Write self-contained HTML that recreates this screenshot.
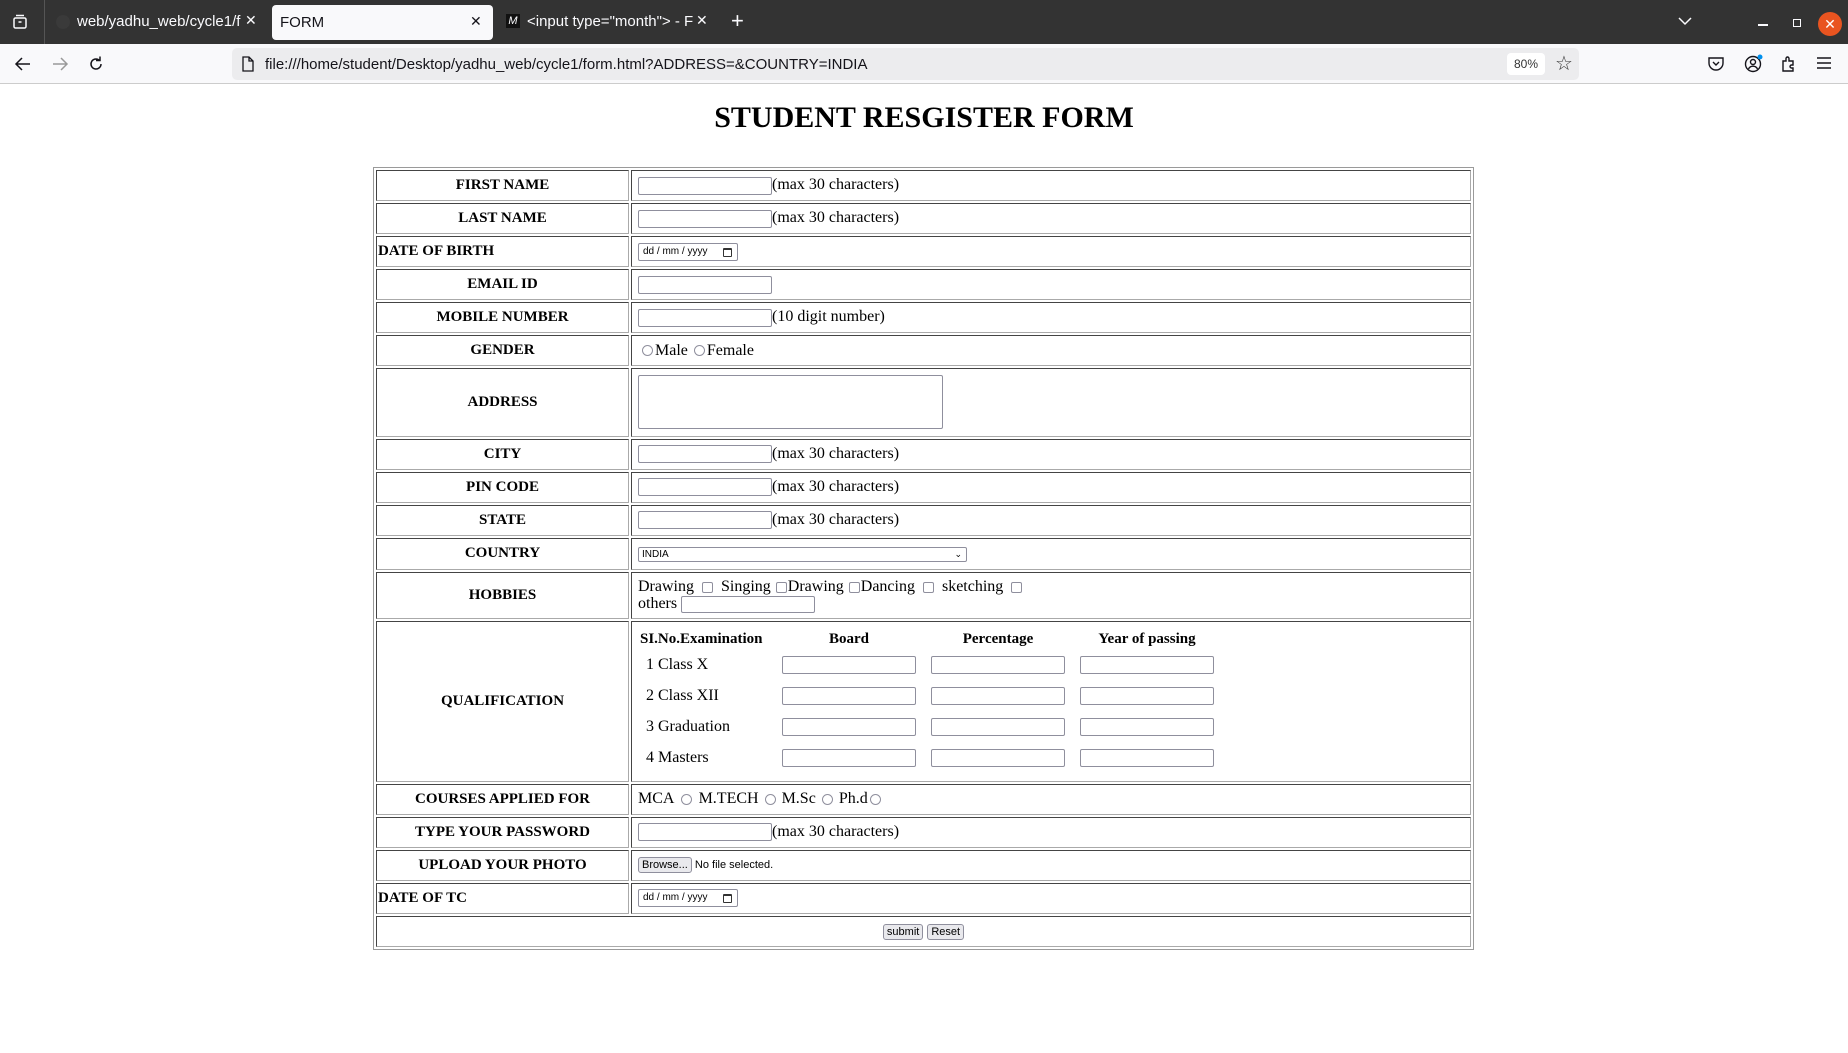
<!DOCTYPE html>
<html><head><meta charset="utf-8"><style>
*{box-sizing:border-box}
body{margin:0;width:1848px;height:1053px;background:#fff;overflow:hidden;font-family:"Liberation Serif",serif;color:#000;position:relative}
.tabs{position:absolute;left:0;top:0;width:1848px;height:44px;background:#333;font-family:"Liberation Sans",sans-serif;color:#fbfbfe;font-size:15px}
.nav{position:absolute;left:0;top:44px;width:1848px;height:40px;background:#f9f9fb;border-bottom:1px solid #ccc;font-family:"Liberation Sans",sans-serif}
.a{position:absolute}
.url{position:absolute;left:232px;top:4px;width:1347px;height:32px;background:#ececee;border-radius:5px}
h1{position:absolute;top:101px;left:0;width:1848px;text-align:center;margin:0;font-size:30px;font-weight:bold}
table.f{position:absolute;left:373px;top:167px;width:1101px;border:1px solid #9a9a9a;border-spacing:2px;border-collapse:separate}
table.f td{border:1px solid;border-color:#444 #aaa #aaa #444;padding:0 0 0 6px;font-size:16px;height:31px;vertical-align:middle}
table.f td.l{width:253px;font-weight:bold;text-align:center;font-size:15px;padding:0}
table.f td.ll{text-align:left;padding-left:1px}
.t{display:inline-block;width:134px;height:18px;border:1px solid #8f8f9d;border-radius:2px;vertical-align:middle;background:#fff}
.d{display:inline-block;width:100px;height:18px;border:1px solid #8f8f9d;border-radius:2px;vertical-align:middle;font-family:"Liberation Sans",sans-serif;font-size:10px;line-height:16px;padding-left:4px;white-space:nowrap;position:relative}
.d i{position:absolute;right:5px;top:4px;width:9px;height:9px;border:1px solid #333;border-top-width:2px;border-radius:1px}
.r{display:inline-block;width:11px;height:11px;border:1px solid #8f8f9d;border-radius:50%;vertical-align:middle;margin:0 2px}
.c{display:inline-block;width:11px;height:11px;border:1px solid #8f8f9d;border-radius:2px;vertical-align:middle;margin:0 4px}
.btn{display:inline-block;border:1px solid #8f8f9d;border-radius:3px;background:#e9e9ed;font-family:"Liberation Sans",sans-serif;font-size:11px;height:16px;line-height:14px;padding:0 3px;vertical-align:middle}
</style></head><body>
<div class="tabs">
<svg class="a" style="left:12px;top:14px" width="16" height="16" viewBox="0 0 16 16" fill="none" stroke="#fbfbfe" stroke-width="1.5"><rect x="2" y="4" width="12" height="10" rx="1.5"/><path d="M4 1.5h8M6.5 8h3"/></svg>
<div class="a" style="left:44px;top:0;width:1px;height:44px;background:#555"></div>
<div class="a" style="left:56px;top:15px;width:14px;height:14px;border-radius:50%;background:#3a3a3a"></div>
<div class="a" style="left:77px;top:13px;width:165px;overflow:hidden;white-space:nowrap">web/yadhu_web/cycle1/f</div>
<div class="a" style="left:245px;top:12px;font-size:14px">✕</div>
<div class="a" style="left:272px;top:5px;width:221px;height:35px;background:#f9f9fb;border-radius:4px;color:#15141a"><span class="a" style="left:8px;top:9px">FORM</span><span class="a" style="left:198px;top:8px;font-size:14px">✕</span></div>
<div class="a" style="left:506px;top:14px;width:14px;height:14px;background:#111;font-size:11px;font-style:italic;text-align:center;line-height:14px">M</div>
<div class="a" style="left:527px;top:13px;white-space:nowrap">&lt;input type="month"&gt; - F</div>
<div class="a" style="left:696px;top:12px;font-size:14px">✕</div>
<div class="a" style="left:731px;top:8px;font-size:22px;font-weight:300">+</div>
<svg class="a" style="left:1677px;top:15px" width="16" height="12" viewBox="0 0 16 12" fill="none" stroke="#fbfbfe" stroke-width="1.5"><path d="M2 3l6 6 6-6"/></svg>
<div class="a" style="left:1758px;top:24px;width:10px;height:1.5px;background:#fbfbfe"></div>
<div class="a" style="left:1793px;top:19px;width:8px;height:8px;border:1.3px solid #fbfbfe"></div>
<div class="a" style="left:1818px;top:12px;width:24px;height:24px;border-radius:50%;background:#e95420;text-align:center;line-height:24px;font-size:14px;color:#fff">✕</div>
</div>
<div class="nav">
<svg class="a" style="left:14px;top:12px" width="18" height="16" viewBox="0 0 18 16" fill="none" stroke="#15141a" stroke-width="1.5"><path d="M16 8H3M8 2L2 8l6 6"/></svg>
<svg class="a" style="left:51px;top:12px" width="18" height="16" viewBox="0 0 18 16" fill="none" stroke="#999" stroke-width="1.5"><path d="M2 8h13M10 2l6 6-6 6"/></svg>
<svg class="a" style="left:87px;top:11px" width="18" height="18" viewBox="0 0 18 18" fill="none" stroke="#15141a" stroke-width="1.5"><path d="M14 9a5 5 0 1 1-2-4M13 1.5v4h-4"/></svg>
<div class="url">
<svg class="a" style="left:9px;top:8px" width="14" height="16" viewBox="0 0 14 16" fill="none" stroke="#15141a" stroke-width="1.3"><path d="M2 1h6l4 4v10H2z M8 1v4h4"/></svg>
<div class="a" style="left:33px;top:8px;font-size:15px;color:#15141a;white-space:nowrap">file:///home/student/Desktop/yadhu_web/cycle1/form.html?ADDRESS=&amp;COUNTRY=INDIA</div>
<div class="a" style="left:1275px;top:5px;width:38px;height:22px;background:#fff;border-radius:4px;font-size:12px;text-align:center;line-height:22px;color:#333">80%</div>
<div class="a" style="left:1323px;top:3px;font-size:20px;color:#333">☆</div>
</div>
<svg class="a" style="left:1707px;top:11px" width="18" height="18" viewBox="0 0 18 18" fill="none" stroke="#15141a" stroke-width="1.4"><path d="M2 3h14v5a7 7 0 0 1-14 0z M6 7l3 3 3-3"/></svg>
<svg class="a" style="left:1744px;top:10px" width="20" height="20" viewBox="0 0 20 20" fill="none" stroke="#15141a" stroke-width="1.4"><circle cx="9" cy="10" r="7.5"/><circle cx="9" cy="8" r="2.5"/><path d="M4.5 15a5 5 0 0 1 9 0"/><circle cx="16" cy="3" r="2.5" fill="#0090ed" stroke="none"/></svg>
<svg class="a" style="left:1780px;top:11px" width="18" height="18" viewBox="0 0 18 18" fill="none" stroke="#15141a" stroke-width="1.4"><path d="M3 6h3V3.5a1.5 1.5 0 0 1 3 0V6h4v4h-1.5a1.5 1.5 0 0 0 0 3H13v3H3z"/></svg>
<svg class="a" style="left:1816px;top:12px" width="16" height="14" viewBox="0 0 16 14" stroke="#15141a" stroke-width="1.4"><path d="M1 2h14M1 7h14M1 12h14"/></svg>
</div>
<h1>STUDENT RESGISTER FORM</h1>
<table class="f">
<tr><td class="l">FIRST NAME</td><td><span class="t"></span>(max 30 characters)</td></tr>
<tr><td class="l">LAST NAME</td><td><span class="t"></span>(max 30 characters)</td></tr>
<tr><td class="l ll">DATE OF BIRTH</td><td><span class="d">dd / mm / yyyy<i></i></span></td></tr>
<tr><td class="l">EMAIL ID</td><td><span class="t"></span></td></tr>
<tr><td class="l">MOBILE NUMBER</td><td><span class="t"></span>(10 digit number)</td></tr>
<tr><td class="l">GENDER</td><td><span class="r" style="margin-left:4px"></span>Male <span class="r"></span>Female</td></tr>
<tr><td class="l" style="height:68.7px">ADDRESS</td><td><span style="display:inline-block;width:305px;height:54px;border:1px solid #8f8f9d;border-radius:2px;vertical-align:middle"></span></td></tr>
<tr><td class="l">CITY</td><td><span class="t"></span>(max 30 characters)</td></tr>
<tr><td class="l">PIN CODE</td><td><span class="t"></span>(max 30 characters)</td></tr>
<tr><td class="l">STATE</td><td><span class="t"></span>(max 30 characters)</td></tr>
<tr><td class="l" style="height:32px">COUNTRY</td><td><span style="display:inline-block;width:329px;height:15px;border:1px solid #8f8f9d;border-radius:2px;vertical-align:middle;font-family:'Liberation Sans',sans-serif;font-size:10px;line-height:13px;padding-left:3px;position:relative">INDIA<span style="position:absolute;right:4px;top:0;font-size:9px">⌄</span></span></td></tr>
<tr><td class="l" style="height:47.5px">HOBBIES</td><td style="line-height:17px">Drawing <span class="c"></span> Singing <span class="c" style="margin:0 1px"></span>Drawing <span class="c" style="margin:0 1px"></span>Dancing <span class="c"></span> sketching <span class="c"></span><br>others <span class="t" style="height:17px"></span></td></tr>
<tr><td class="l" style="height:160.6px">QUALIFICATION</td><td style="position:relative;padding:0">
<div class="a" style="left:8px;top:9px;font-weight:bold;font-size:15px">SI.No.Examination</div>
<div class="a" style="left:150px;top:9px;width:134px;text-align:center;font-weight:bold;font-size:15px">Board</div>
<div class="a" style="left:299px;top:9px;width:134px;text-align:center;font-weight:bold;font-size:15px">Percentage</div>
<div class="a" style="left:448px;top:9px;width:134px;text-align:center;font-weight:bold;font-size:15px">Year of passing</div>
<div class="a" style="left:14px;top:34px">1 Class X</div>
<div class="a" style="left:14px;top:65px">2 Class XII</div>
<div class="a" style="left:14px;top:96px">3 Graduation</div>
<div class="a" style="left:14px;top:127px">4 Masters</div>
<span class="t a" style="left:150px;top:34px"></span><span class="t a" style="left:299px;top:34px"></span><span class="t a" style="left:448px;top:34px"></span>
<span class="t a" style="left:150px;top:65px"></span><span class="t a" style="left:299px;top:65px"></span><span class="t a" style="left:448px;top:65px"></span>
<span class="t a" style="left:150px;top:96px"></span><span class="t a" style="left:299px;top:96px"></span><span class="t a" style="left:448px;top:96px"></span>
<span class="t a" style="left:150px;top:127px"></span><span class="t a" style="left:299px;top:127px"></span><span class="t a" style="left:448px;top:127px"></span>
</td></tr>
<tr><td class="l">COURSES APPLIED FOR</td><td>MCA <span class="r" style="margin:0 3px"></span> M.TECH <span class="r"></span> M.Sc <span class="r"></span> Ph.d <span class="r" style="margin-left:-2px"></span></td></tr>
<tr><td class="l">TYPE YOUR PASSWORD</td><td><span class="t"></span>(max 30 characters)</td></tr>
<tr><td class="l">UPLOAD YOUR PHOTO</td><td style="font-family:'Liberation Sans',sans-serif;font-size:11px"><span class="btn">Browse...</span> No file selected.</td></tr>
<tr><td class="l ll">DATE OF TC</td><td><span class="d">dd / mm / yyyy<i></i></span></td></tr>
<tr><td colspan="2" style="text-align:center;padding:0"><span class="btn">submit</span> <span class="btn">Reset</span></td></tr>
</table>
</body></html>
